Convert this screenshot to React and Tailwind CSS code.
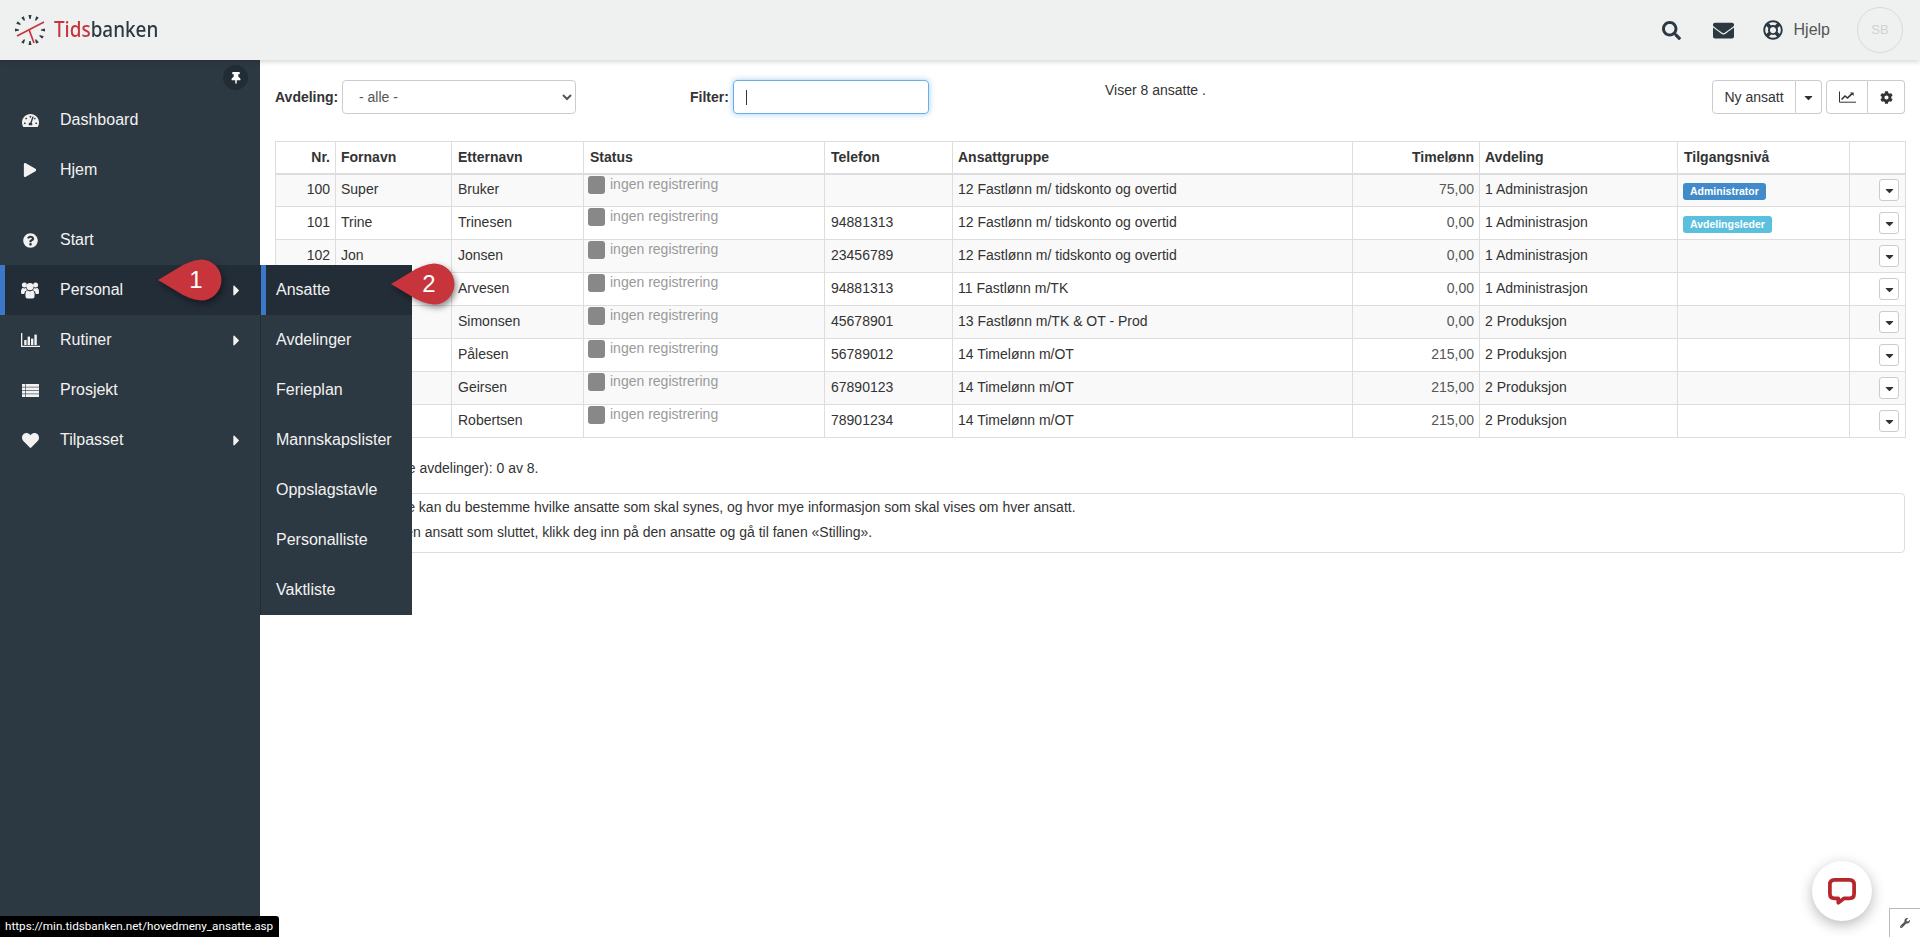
import React from "react";
import {
  FaTachometerAlt, FaPlay, FaQuestionCircle, FaHeart,
  FaCaretRight, FaCaretDown, FaSearch, FaEnvelope, FaRegLifeRing, FaCog, FaWrench, FaThumbtack,
} from "react-icons/fa";

function UsersIcon() {
  return (
    <svg width="18" height="17" viewBox="0 0 18 17" fill="currentColor">
      <circle cx="3.4" cy="3" r="2.5" />
      <circle cx="14.6" cy="3" r="2.5" />
      <path d="M0 10.5 Q0 6.2 2 6 Q3.4 6.8 5 6 L6 8.2 Q3.4 9 3.2 12 H1 Q0 12 0 10.5 Z" />
      <path d="M18 10.5 Q18 6.2 16 6 Q14.6 6.8 13 6 L12 8.2 Q14.6 9 14.8 12 H17 Q18 12 18 10.5 Z" />
      <circle cx="9" cy="4.6" r="3.6" />
      <path d="M4.4 14 Q4.2 9.2 6.4 8.6 Q9 10.2 11.6 8.6 Q13.8 9.2 13.6 14 Q13.6 16.5 11.5 16.5 H6.5 Q4.4 16.5 4.4 14 Z" />
    </svg>
  );
}

function BarsIcon() {
  return (
    <svg width="19" height="14" viewBox="0 0 19 14" fill="currentColor">
      <path d="M0 0 H1.3 V12.7 H19 V14 H0 Z" />
      <rect x="3.2" y="7" width="2.4" height="5" />
      <rect x="6.6" y="3.6" width="2.4" height="8.4" />
      <rect x="10" y="5.6" width="2.4" height="6.4" />
      <rect x="13.4" y="1.6" width="2.4" height="10.4" />
    </svg>
  );
}

function RowsIcon() {
  return (
    <svg width="17" height="13" viewBox="0 0 17 13" fill="currentColor">
      {[0, 3.4, 6.8, 10.2].map((y) => (
        <React.Fragment key={y}>
          <rect x="0" y={y} width="3.4" height="2.8" />
          <rect x="4" y={y} width="13" height="2.8" />
        </React.Fragment>
      ))}
    </svg>
  );
}

function LineChartIcon() {
  return (
    <svg width="17" height="12" viewBox="0 0 17 12" fill="none" stroke="#333">
      <path d="M0.5 0.5 V11.2 H17" strokeWidth="1" />
      <path d="M2.5 8.5 L6 5 L8.5 7 L13 2.6" strokeWidth="1.6" />
      <path d="M11 1.4 H14.6 V5 Z" fill="#333" stroke="none" />
    </svg>
  );
}

const menu = [
  { label: "Dashboard", icon: <FaTachometerAlt className="text-[17px]" /> },
  { label: "Hjem", icon: <FaPlay className="text-[14px]" />, gapAfter: true },
  { label: "Start", icon: <FaQuestionCircle className="text-[15px]" /> },
  { label: "Personal", icon: <UsersIcon />, active: true, arrow: true },
  { label: "Rutiner", icon: <BarsIcon />, arrow: true },
  { label: "Prosjekt", icon: <RowsIcon /> },
  { label: "Tilpasset", icon: <FaHeart className="text-[17px]" />, arrow: true },
];

const submenu = ["Ansatte", "Avdelinger", "Ferieplan", "Mannskapslister", "Oppslagstavle", "Personalliste", "Vaktliste"];

const rows = [
  ["100", "Super", "Bruker", "", "12 Fastlønn m/ tidskonto og overtid", "75,00", "1 Administrasjon", "Administrator"],
  ["101", "Trine", "Trinesen", "94881313", "12 Fastlønn m/ tidskonto og overtid", "0,00", "1 Administrasjon", "Avdelingsleder"],
  ["102", "Jon", "Jonsen", "23456789", "12 Fastlønn m/ tidskonto og overtid", "0,00", "1 Administrasjon", ""],
  ["103", "Arve", "Arvesen", "94881313", "11 Fastlønn m/TK", "0,00", "1 Administrasjon", ""],
  ["104", "Simon", "Simonsen", "45678901", "13 Fastlønn m/TK & OT - Prod", "0,00", "2 Produksjon", ""],
  ["105", "Pål", "Pålesen", "56789012", "14 Timelønn m/OT", "215,00", "2 Produksjon", ""],
  ["106", "Geir", "Geirsen", "67890123", "14 Timelønn m/OT", "215,00", "2 Produksjon", ""],
  ["107", "Robert", "Robertsen", "78901234", "14 Timelønn m/OT", "215,00", "2 Produksjon", ""],
];

function Logo() {
  const ticks = [0, 30, 90, 120, 150, 180, 210, 270, 300, 330];
  return (
    <svg width="32" height="32" viewBox="0 0 32 32" className="shrink-0">
      {ticks.map((a) => (
        <polygon key={a} points="14.5,1 17.5,1 16.6,5 15.4,5" fill="#2f3a44" transform={`rotate(${a} 16 16)`} />
      ))}
      <line x1="3" y1="22" x2="30" y2="8" stroke="#c9343c" strokeWidth="1.7" />
      <line x1="15" y1="15.5" x2="20" y2="29" stroke="#c9343c" strokeWidth="1.7" />
    </svg>
  );
}

function Callout({ n, className }) {
  return (
    <div className={`absolute w-[64px] h-[42px] z-30 ${className}`}>
      <svg width="64" height="42" viewBox="0 0 64 42" className="absolute inset-0 drop-shadow-[2px_3px_3px_rgba(0,0,0,0.45)]">
        <path d="M0 21 L20 9 Q30 2 43 0.5 A20.5 20.5 0 1 1 43 41.5 Q30 40 20 33 Z" fill="#c7343b" />
      </svg>
      <span className="absolute inset-0 flex items-center justify-center pl-[12px] pb-[1px] text-[24px] text-white">{n}</span>
    </div>
  );
}

const th = "border border-b-2 border-[#ddd] px-[5px]";
const td = "border border-[#ddd] px-[5px] pb-[2px]";

export default function App() {
  return (
    <div className="relative h-[937px] w-full overflow-hidden bg-white font-['Liberation_Sans',Arial,sans-serif] text-[14px] text-[#333]">
      <header className="relative z-10 flex h-[60px] items-center bg-[#eff1f1] pl-[14px] shadow-[0_2px_5px_rgba(0,0,0,0.16)]">
        <Logo />
        <div className="ml-[8px] origin-left scale-x-[0.9] font-['Noto_Sans',sans-serif] text-[21px] font-medium">
          <span className="text-[#c9343c]">Tids</span>
          <span className="text-[#2d3942]">banken</span>
        </div>
        <div className="ml-auto flex items-center pr-[17px]">
          <FaSearch className="text-[19px] text-[#2d3942]" />
          <FaEnvelope className="ml-[32px] text-[21px] text-[#2d3942]" />
          <FaRegLifeRing className="ml-[29px] text-[20px] text-[#2d3942]" />
          <span className="ml-[11px] text-[16px] text-[#555]">Hjelp</span>
          <div className="ml-[27px] flex h-[46px] w-[46px] items-center justify-center rounded-full border border-[#d9dbdb] text-[13px] text-[#cfd1d1]">SB</div>
        </div>
      </header>

      <div className="flex h-[877px]">
        <aside className="relative w-[260px] shrink-0 bg-[#2d3942] text-[16px] text-[#f2f2f2]">
          <div className="flex h-[35px] justify-end pr-[12px] pt-[5px]">
            <div className="flex h-[25px] w-[25px] items-center justify-center rounded-full bg-[#222c35]">
              <FaThumbtack className="text-[12px] text-white" />
            </div>
          </div>
          <nav>
            {menu.map(({ label, icon, active, arrow, gapAfter }) => (
              <div key={label} className={gapAfter ? "mb-[20px]" : ""}>
                <div className={`flex h-[50px] items-center ${active ? "bg-[#232d38] border-l-[5px] border-[#3b78c9] pl-[15px]" : "pl-[20px]"}`}>
                  <span className="flex w-[20px] justify-center">{icon}</span>
                  <span className="ml-[20px]">{label}</span>
                  {arrow && <FaCaretRight className="ml-auto mr-[15px] text-[17px]" />}
                </div>
              </div>
            ))}
          </nav>
        </aside>

        <main className="min-w-0 flex-1 px-[15px] pt-[20px]">
          <div className="flex h-[34px] items-start">
            <label className="mt-[7px] w-[67px] font-bold">Avdeling:</label>
            <select className="h-[34px] w-[234px] rounded-[4px] border border-[#ccc] bg-white pl-[12px] pr-[6px] text-[14px] text-[#555]">
              <option>- alle -</option>
            </select>
            <label className="ml-[114px] mt-[7px] w-[43px] font-bold">Filter:</label>
            <div className="flex h-[34px] w-[196px] items-center rounded-[4px] border border-[#66afe9] pl-[12px] shadow-[0_0_6px_rgba(102,175,233,0.6)]">
              <span className="h-[15px] w-px bg-[#333]" />
            </div>
            <span className="ml-[176px] text-[#333]">Viser 8 ansatte .</span>
            <div className="ml-auto flex h-[34px] items-stretch">
              <button className="w-[84px] rounded-l-[4px] border border-[#ccc]">Ny ansatt</button>
              <button className="flex w-[26px] items-center justify-center rounded-r-[4px] border border-l-0 border-[#ccc]">
                <FaCaretDown className="text-[13px]" />
              </button>
              <button className="ml-[4px] flex w-[42px] items-center justify-center rounded-l-[4px] border border-[#ccc]">
                <LineChartIcon />
              </button>
              <button className="flex w-[37px] items-center justify-center rounded-r-[4px] border border-l-0 border-[#ccc]">
                <FaCog className="text-[13px]" />
              </button>
            </div>
          </div>

          <table className="mt-[27px] w-[1630px] table-fixed border-collapse">
            <colgroup>
              <col className="w-[60px]" />
              <col className="w-[116px]" />
              <col className="w-[132px]" />
              <col className="w-[241px]" />
              <col className="w-[128px]" />
              <col className="w-[400px]" />
              <col className="w-[127px]" />
              <col className="w-[198px]" />
              <col className="w-[172px]" />
              <col className="w-[56px]" />
            </colgroup>
            <thead>
              <tr className="h-[32px] text-left font-bold">
                <th className={`${th} text-right`}>Nr.</th>
                <th className={th}>Fornavn</th>
                <th className={`${th} pl-[6px]`}>Etternavn</th>
                <th className={`${th} pl-[6px]`}>Status</th>
                <th className={`${th} pl-[6px]`}>Telefon</th>
                <th className={th}>Ansattgruppe</th>
                <th className={`${th} text-right`}>Timelønn</th>
                <th className={th}>Avdeling</th>
                <th className={`${th} pl-[6px]`}>Tilgangsnivå</th>
                <th className={th} />
              </tr>
            </thead>
            <tbody>
              {rows.map((r, i) => (
                <tr key={r[0]} className={`h-[33px] ${i % 2 === 0 ? "bg-[#f9f9f9]" : "bg-white"}`}>
                  <td className={`${td} text-right`}>{r[0]}</td>
                  <td className={td}>{r[1]}</td>
                  <td className={`${td} pl-[6px]`}>{r[2]}</td>
                  <td className="border border-[#ddd] pl-[4px] pt-[1px] align-top">
                    <div className="flex items-start">
                      <span className="h-[18px] w-[17px] rounded-[3px] bg-[#888]" />
                      <span className="ml-[5px] leading-[16px] text-[#999]">ingen registrering</span>
                    </div>
                  </td>
                  <td className={`${td} pl-[6px]`}>{r[3]}</td>
                  <td className={td}>{r[4]}</td>
                  <td className={`${td} text-right text-[#555]`}>{r[5]}</td>
                  <td className={td}>{r[6]}</td>
                  <td className="border border-[#ddd] px-[5px]">
                    {r[7] && (
                      <span className={`inline-flex h-[17px] items-center rounded-[3px] px-[7px] text-[10.5px] font-bold text-white ${r[7] === "Administrator" ? "bg-[#428bca]" : "bg-[#5bc0de]"}`}>
                        {r[7]}
                      </span>
                    )}
                  </td>
                  <td className="border border-[#ddd] pr-[6px]">
                    <div className="flex justify-end">
                      <button className="flex h-[22px] w-[20px] items-center justify-center rounded-[3px] border border-[#ccc] bg-white">
                        <FaCaretDown className="text-[13px]" />
                      </button>
                    </div>
                  </td>
                </tr>
              ))}
            </tbody>
          </table>

          <p className="ml-[2px] mt-[22px] leading-[16px]">Ansatte innlogget (alle avdelinger): 0 av 8.</p>
          <div className="mt-[17px] h-[60px] rounded-[4px] border border-[#ddd] px-[11px] pt-[1px] leading-[24.5px]">
            <p className="pl-[5px]">Under innstillingene kan du bestemme hvilke ansatte som skal synes, og hvor mye informasjon som skal vises om hver ansatt.</p>
            <p>For å gjenopprette en ansatt som sluttet, klikk deg inn på den ansatte og gå til fanen «Stilling».</p>
          </div>
        </main>
      </div>

      {/* open submenu */}
      <div className="absolute left-[260px] top-[265px] z-20 w-[152px] border-l border-[#232d38] bg-[#2d3942] text-[16px] text-[#f2f2f2]">
        {submenu.map((s, i) => (
          <div key={s} className={`flex h-[50px] items-center ${i === 0 ? "border-l-[5px] border-[#3b78c9] bg-[#232d38] pl-[10px]" : "pl-[15px]"}`}>
            {s}
          </div>
        ))}
      </div>

      <Callout n="1" className="left-[158px] top-[259px]" />
      <Callout n="2" className="left-[391px] top-[263px]" />

      {/* chat launcher */}
      <div className="absolute left-[1812px] top-[861px] z-30 flex h-[60px] w-[60px] items-center justify-center rounded-full bg-white shadow-[0_4px_14px_rgba(0,0,0,0.28)]">
        <svg width="28" height="27" viewBox="0 0 30 29">
          <path d="M7 2 H23 Q28 2 28 7 V17 Q28 22 23 22 H17 L11 26.5 V22 H7 Q2 22 2 17 V7 Q2 2 7 2 Z" fill="none" stroke="#b5272d" strokeWidth="4" strokeLinejoin="round" />
        </svg>
      </div>

      {/* wrench */}
      <div className="absolute right-0 top-[908px] z-30 flex h-[29px] w-[31px] items-center justify-center border-l border-t border-[#bbb] bg-white">
        <FaWrench className="text-[10px] text-[#555]" />
      </div>

      {/* browser status bar */}
      <div className="absolute bottom-0 left-0 z-40 flex h-[21px] items-center rounded-tr-[3px] bg-black pl-[5px] pr-[6px] font-['Roboto',sans-serif] text-[11.7px] text-white">
        https://min.tidsbanken.net/hovedmeny_ansatte.asp
      </div>
    </div>
  );
}
